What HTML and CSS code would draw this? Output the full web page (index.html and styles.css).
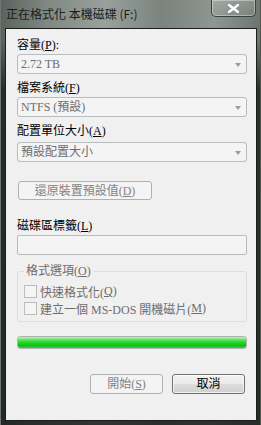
FILE: index.html
```html
<!DOCTYPE html>
<html lang="zh-Hant">
<head>
    <meta charset="UTF-8">
    <meta name="viewport" content="width=device-width, initial-scale=1.0">
    <title>正在格式化 本機磁碟 (F:)</title>
    <link rel="stylesheet" href="styles.css">
</head>
<body>
    <div class="window">
        <div class="titlebar">
            <span class="title">正在格式化 本機磁碟 (F:)</span>
            <div class="close">
                <svg width="11" height="9" viewBox="0 0 11 9">
                    <path d="M1 1 L10 8 M10 1 L1 8" stroke="#fff" stroke-width="2.4" stroke-linecap="square"/>
                </svg>
            </div>
        </div>

        <div class="client">
            <div class="field">
                <div class="label">容量(<u>P</u>):</div>
                <div class="combo"><span>2.72 TB</span><i class="arrow"></i></div>
            </div>

            <div class="field">
                <div class="label">檔案系統(<u>F</u>)</div>
                <div class="combo"><span>NTFS (預設)</span><i class="arrow"></i></div>
            </div>

            <div class="field field-alloc">
                <div class="label">配置單位大小(<u>A</u>)</div>
                <div class="combo"><span>預設配置大小</span><i class="arrow"></i></div>
            </div>

            <button class="btn btn-restore" disabled>還原裝置預設值(<u>D</u>)</button>

            <div class="field field-volume">
                <div class="label">磁碟區標籤(<u>L</u>)</div>
                <div class="textbox"></div>
            </div>

            <fieldset class="group">
                <legend>格式選項(<u>O</u>)</legend>
                <div class="check"><span class="box"></span>快速格式化(<u>Q</u>)</div>
                <div class="check"><span class="box"></span>建立一個 MS-DOS 開機磁片(<u>M</u>)</div>
            </fieldset>

            <div class="progress"><div class="fill" style="width: 100%"></div></div>

            <div class="actions">
                <button class="btn" disabled>開始(<u>S</u>)</button>
                <button class="btn btn-cancel">取消</button>
            </div>
        </div>
    </div>
</body>
</html>
```

FILE: styles.css
```css
body {
    margin: 0;
    background: #2e3431;
    font-family: "Liberation Serif", "Noto Sans CJK TC", serif;
    font-size: 12px;
}
.window {
    width: 261px;
    height: 425px;
    display: flex;
    flex-direction: column;
    background:
        linear-gradient(180deg, rgba(0,0,0,0) 0, rgba(0,0,0,0) 40px, rgba(20,26,22,0.75) 90px, rgba(20,26,22,0.8) 100%),
        linear-gradient(90deg, #59625d 0%, #7f8883 18%, #9aa19c 40%, #7a837e 62%, #8e9691 82%, #6b746f 100%);
    box-shadow: inset 1px 0 0 #6f7672, inset -1px 0 0 #4f5652;
}
.titlebar {
    height: 28px;
    display: flex;
    align-items: flex-start;
    flex-shrink: 0;
}
.title {
    font-family: "Noto Sans CJK TC", sans-serif;
    font-size: 12px;
    line-height: 14px;
    color: #1a1d1b;
    padding: 7px 0 0 6px;
}
.close {
    margin-left: auto;
    margin-right: 5px;
    width: 43px;
    height: 16px;
    border: 1px solid #3a403c;
    border-top: none;
    border-radius: 0 0 5px 5px;
    background: linear-gradient(180deg, rgba(255,255,255,0.18), rgba(255,255,255,0.05));
    box-shadow: inset 0 0 0 1px rgba(255,255,255,0.35);
    display: flex;
    align-items: center;
    justify-content: center;
}
.client {
    flex: 1;
    margin: 0 4px 4px 5px;
    border: 1px solid #1b1e1c;
    background: #f0f0f0;
    padding: 8px 9px 0 11px;
}
.label {
    height: 17px;
    line-height: 17px;
    color: #000;
    white-space: nowrap;
}
.field + .field {
    margin-top: 6px;
}
.field-alloc .label {
    height: 19px;
}
.combo {
    height: 18px;
    border: 1px solid #b8bcbf;
    border-radius: 3px;
    background: #f4f4f4;
    display: flex;
    align-items: center;
    padding: 0 5px 0 3px;
    color: #6d6d6d;
}
.combo span {
    flex: 1;
    line-height: 16px;
}
.arrow {
    width: 0;
    height: 0;
    border-left: 3.5px solid transparent;
    border-right: 3.5px solid transparent;
    border-top: 4px solid #9c9c9c;
    margin-top: 2px;
}
.btn {
    font-family: "Liberation Serif", "Noto Sans CJK TC", serif;
    font-size: 12px;
    height: 20px;
    width: 73px;
    padding: 0;
    border: 1px solid #707070;
    border-radius: 3px;
    background: linear-gradient(180deg, #f2f2f2 0%, #ebebeb 48%, #dddddd 52%, #cfcfcf 100%);
    color: #000;
    line-height: 16px;
    box-shadow: inset 0 0 0 1px rgba(255,255,255,0.7);
}
.btn:disabled {
    border-color: #adb2b5;
    background: #f4f4f4;
    color: #838383;
    box-shadow: none;
}
.btn-restore {
    display: block;
    width: 134px;
    height: 19px;
    margin: 19px 0 0 1px;
}
.field-volume {
    margin-top: 18px;
}
.textbox {
    height: 18px;
    border: 1px solid #b8bcbf;
    border-radius: 2px;
    background: #f4f4f4;
}
.group {
    margin: 9px 0 0;
    padding: 5px 6px 4px;
    border: 1px solid #d9dfe3;
    border-radius: 3px;
    min-width: 0;
}
.group legend {
    padding: 0 2px;
    line-height: 14px;
    color: #6d6d6d;
}
.check {
    height: 17px;
    display: flex;
    align-items: center;
    color: #6d6d6d;
    white-space: nowrap;
}
.box {
    width: 11px;
    height: 11px;
    border: 1px solid #bcbcbc;
    background: #f4f4f4;
    margin: 0 3px 0 0;
    flex-shrink: 0;
}
.progress {
    margin-top: 14px;
    height: 11px;
    border: 1px solid #b2b2b2;
    border-radius: 3px;
    background: #e6e6e6;
    overflow: hidden;
}
.fill {
    height: 100%;
    background: linear-gradient(180deg, #b9f5b9 0%, #4fe24f 30%, #1fd11f 55%, #0fbd1f 80%, #3fcf4f 100%);
}
.actions {
    display: flex;
    justify-content: flex-end;
    gap: 9px;
    margin-top: 25px;
    padding-right: 2px;
}
```
